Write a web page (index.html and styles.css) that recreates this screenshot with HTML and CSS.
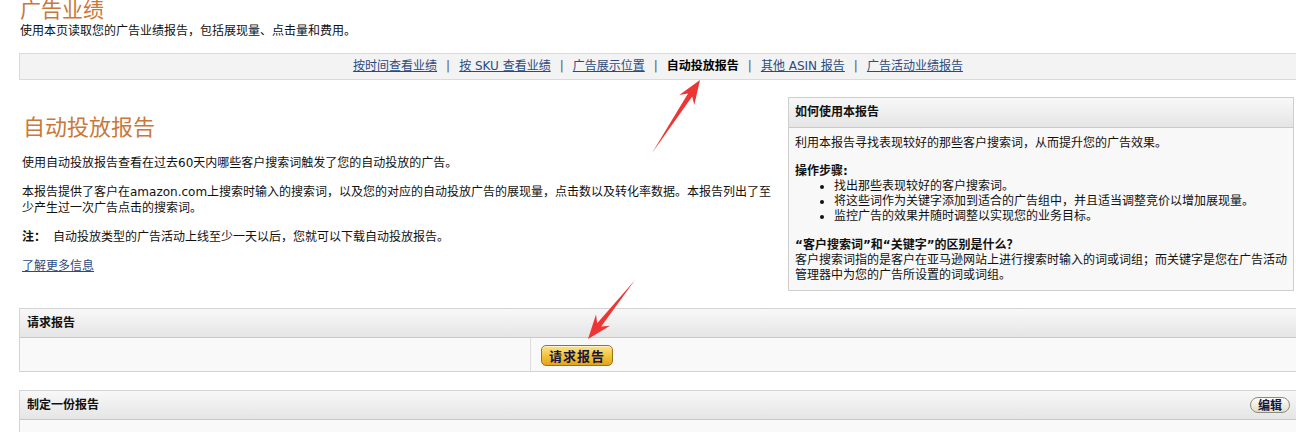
FILE: index.html
```html
<!DOCTYPE html>
<html lang="zh-CN">
<head>
<meta charset="utf-8">
<title>广告业绩</title>
<link rel="stylesheet" href="styles.css">
</head>
<body>
<div class="page">
  <h1 class="page-title">广告业绩</h1>
  <p class="page-sub">使用本页读取您的广告业绩报告，包括展现量、点击量和费用。</p>
  <nav class="tabs"><a href="#">按时间查看业绩</a><span class="sep">|</span><a href="#">按 SKU 查看业绩</a><span class="sep">|</span><a href="#">广告展示位置</a><span class="sep">|</span><b class="current">自动投放报告</b><span class="sep">|</span><a href="#">其他 ASIN 报告</a><span class="sep">|</span><a href="#">广告活动业绩报告</a></nav>

  <div class="main">
    <div class="intro">
      <h2 class="intro-title">自动投放报告</h2>
      <p>使用自动投放报告查看在过去60天内哪些客户搜索词触发了您的自动投放的广告。</p>
      <p>本报告提供了客户在amazon.com上搜索时输入的搜索词，以及您的对应的自动投放广告的展现量，点击数以及转化率数据。本报告列出了至少产生过一次广告点击的搜索词。</p>
      <p><b class="note">注：</b>自动投放类型的广告活动上线至少一天以后，您就可以下载自动投放报告。</p>
      <p><a href="#" class="more">了解更多信息</a></p>
    </div>
    <aside class="help">
      <div class="box-head">如何使用本报告</div>
      <div class="help-body">
        <p>利用本报告寻找表现较好的那些客户搜索词，从而提升您的广告效果。</p>
        <b>操作步骤:</b>
        <ul>
          <li>找出那些表现较好的客户搜索词。</li>
          <li>将这些词作为关键字添加到适合的广告组中，并且适当调整竞价以增加展现量。</li>
          <li>监控广告的效果并随时调整以实现您的业务目标。</li>
        </ul>
        <b class="q">“客户搜索词”和“关键字”的区别是什么？</b>
        <div>客户搜索词指的是客户在亚马逊网站上进行搜索时输入的词或词组；而关键字是您在广告活动管理器中为您的广告所设置的词或词组。</div>
      </div>
    </aside>
  </div>

  <section class="box request">
    <div class="box-head">请求报告</div>
    <div class="request-row">
      <div class="cell-label"></div>
      <div class="cell-action"><button class="btn-gold" type="button">请求报告</button></div>
    </div>
  </section>

  <section class="box custom">
    <div class="box-head head-split"><span>制定一份报告</span><button class="btn-edit" type="button">编辑</button></div>
    <div class="box-body"></div>
  </section>
</div>

<svg class="annotations" width="1296" height="432" viewBox="0 0 1296 432" aria-hidden="true">
  <polygon points="652,153 688.0,93.6 679.3,95.1 700,80 694.3,104.9 692.2,96.4" />
  <polygon points="635,280 597.2,323.3 596.0,314.6 588,339 610.0,325.8 601.2,326.5" />
</svg>
</body>
</html>
```

FILE: styles.css
```css
html, body {
  margin: 0;
  overflow: hidden;
  background: #fff;
}

body {
  position: relative;
  width: 1296px;
  height: 432px;
  font-family: "DejaVu Sans", "Noto Sans CJK SC", sans-serif;
  font-size: 12px;
  color: #111;
}

.page {
  margin-left: 19px;
  width: 1278px;
}

.page-title {
  margin: -5px 0 0;
  padding-left: 1px;
  font-family: "Noto Sans CJK SC", sans-serif;
  font-size: 21px;
  line-height: 26px;
  font-weight: 400;
  color: #c9783c;
}

.page-sub {
  margin: 2px 0 14px;
  padding-left: 1px;
  line-height: 16px;
}

.tabs {
  box-sizing: border-box;
  height: 27px;
  line-height: 25px;
  border: 1px solid #dadada;
  background: #f3f3f3;
  text-align: center;
  white-space: nowrap;
}

.tabs a {
  color: #2b4b80;
  text-decoration: underline;
}

.tabs .current {
  font-weight: 700;
  color: #000;
}

.tabs .sep {
  margin: 0 9px;
  color: #555;
}

.main {
  display: grid;
  grid-template-columns: 758px 506px;
  column-gap: 11px;
  align-items: start;
  margin-top: 17px;
}

.intro {
  padding-left: 3px;
}

.intro-title {
  margin: 14px 0 16px;
  padding-left: 1px;
  font-family: "Noto Sans CJK SC", sans-serif;
  font-size: 22px;
  line-height: 28px;
  font-weight: 400;
  color: #c9783c;
}

.intro p {
  margin: 0 0 13px;
  line-height: 16px;
}

.intro .note {
  font-weight: 700;
  margin-right: 7px;
}

.more {
  color: #2b4b80;
  text-decoration: underline;
}

.help {
  border: 1px solid #cfcfcf;
  background: #f8f8f8;
}

.box-head {
  height: 29px;
  line-height: 29px;
  padding: 0 6px;
  border-bottom: 1px solid #c9c9c9;
  background: linear-gradient(#f8f8f8, #e5e5e5);
  font-weight: 700;
  color: #111;
}

.help-body {
  padding: 8px 4px 7px 6px;
  line-height: 15px;
}

.help-body p {
  margin: 0 0 13px;
}

.help-body b {
  display: block;
  font-weight: 700;
}

.help-body ul {
  margin: 0 0 14px;
  padding-left: 39px;
}

.box {
  border: 1px solid #d3d3d3;
  border-right: 0;
  background: #f9f9f9;
}

.box .box-head {
  height: 28px;
  line-height: 28px;
  padding: 0 7px;
}

.request {
  margin-top: 17px;
}

.request-row {
  display: grid;
  grid-template-columns: 511px 1fr;
}

.cell-label {
  border-right: 1px solid #dcdcdc;
}

.cell-action {
  padding: 7px 10px 5px;
}

.btn-gold {
  box-sizing: border-box;
  display: block;
  height: 21px;
  padding: 0 7px;
  border: 1px solid #9a7418;
  border-radius: 5px;
  background: linear-gradient(#fbe48a, #f2c23c 55%, #e3a21c);
  box-shadow: inset 0 1px 0 rgba(255, 255, 255, 0.6);
  font-family: "Noto Sans CJK SC", sans-serif;
  font-size: 13px;
  font-weight: 700;
  letter-spacing: 1px;
  line-height: 19px;
  color: #14143f;
}

.custom {
  margin-top: 18px;
}

.head-split {
  display: flex;
  align-items: center;
  justify-content: space-between;
}

.btn-edit {
  box-sizing: border-box;
  height: 16px;
  padding: 0 7px;
  border: 1px solid #8c8a7c;
  border-radius: 8px;
  background: linear-gradient(#fdfdf4, #e2dfcc);
  font-family: "Noto Sans CJK SC", sans-serif;
  font-size: 12px;
  font-weight: 700;
  line-height: 14px;
  color: #14143f;
}

.box-body {
  height: 30px;
}

.annotations {
  position: absolute;
  left: 0;
  top: 0;
  pointer-events: none;
}

.annotations polygon {
  fill: #ee3535;
}
```
